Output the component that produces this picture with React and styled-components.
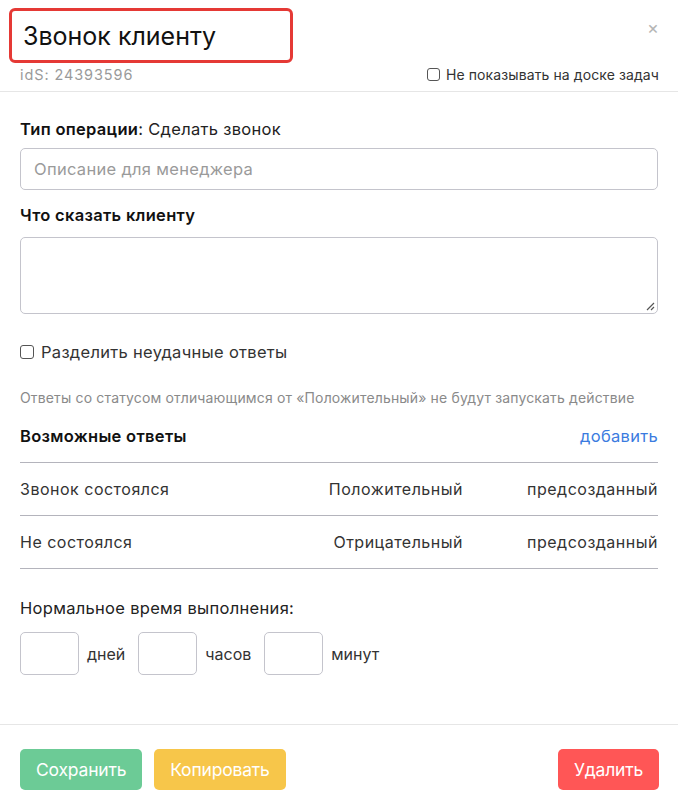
import React from "react";
import styled, { createGlobalStyle } from "styled-components";

const Global = createGlobalStyle`
  html, body { margin: 0; padding: 0; background: #fff; }
  body { font-family: Inter, "Noto Sans", sans-serif; color: #222; }
  * { box-sizing: border-box; }
`;

const Modal = styled.div`
  width: 678px;
  height: 806px;
  background: #fff;
  display: flex;
  flex-direction: column;
`;

const Header = styled.div`
  padding: 8px 19px 0 9px;
  border-bottom: 1px solid #e6e6e6;
  height: 92px;
  display: flex;
  flex-direction: column;
`;

const TitleRow = styled.div`
  display: flex;
  justify-content: space-between;
  align-items: flex-start;
`;

const TitleBox = styled.div`
  border: 3px solid #e53935;
  border-radius: 6px;
  width: 284px;
  height: 55px;
  display: flex;
  align-items: center;
  padding-left: 11px;
`;

const Title = styled.h1`
  margin: 0;
  font-size: 25px;
  font-weight: 400;
  color: #111;
`;

const Close = styled.span`
  color: #b5b5b5;
  font-size: 18px;
  margin-top: 11px;
  line-height: 1;
`;

const MetaRow = styled.div`
  display: flex;
  justify-content: space-between;
  align-items: center;
  padding-left: 11px;
  margin-top: 3px;
`;

const Ids = styled.span`
  font-size: 14.5px;
  color: #9a9a9a;
  letter-spacing: 0.9px;
`;

const CheckLabel = styled.label`
  display: flex;
  align-items: center;
  gap: ${(p) => (p.$big ? "7px" : "6px")};
  font-size: ${(p) => (p.$big ? "16.5px" : "14px")};
  color: #333;
  letter-spacing: ${(p) => (p.$big ? "0.3px" : "0.1px")};
`;

const Box = styled.span`
  width: ${(p) => p.$size || 13}px;
  height: ${(p) => p.$size || 13}px;
  border: 1px solid #555;
  border-radius: 3px;
  display: inline-block;
`;

const Body = styled.div`
  flex: 1;
  padding: 27px 20px 0 20px;
  display: flex;
  flex-direction: column;
`;

const Label = styled.div`
  font-size: 16.5px;
  color: #222;
  letter-spacing: 0.3px;
  margin-top: ${(p) => p.$mt || 0}px;
  margin-bottom: ${(p) => p.$mb || 0}px;
  b { font-weight: 600; color: #111; }
`;

const Input = styled.div`
  height: 42px;
  border: 1px solid #c4c4cc;
  border-radius: 5px;
  display: flex;
  align-items: center;
  padding-left: 13px;
  font-size: 16.5px;
  color: #9a9a9a;
  letter-spacing: 0.3px;
  margin-bottom: ${(p) => p.$mb || 0}px;
`;

const TextArea = styled.div`
  height: 77px;
  border: 1px solid #c4c4cc;
  border-radius: 5px;
  position: relative;
  margin-bottom: 28px;
`;

const Grip = styled.svg`
  position: absolute;
  right: 2px;
  bottom: 2px;
`;

const Note = styled.div`
  font-size: 14px;
  color: #8a8a8a;
  margin-top: 27px;
  letter-spacing: 0.15px;
`;

const SectionHead = styled.div`
  display: flex;
  justify-content: space-between;
  align-items: center;
  margin-top: 20px;
  padding-bottom: 16px;
  border-bottom: 1px solid #b4b4bc;
`;

const Link = styled.span`
  color: #3a7be0;
  font-size: 16.5px;
  letter-spacing: 0.3px;
`;

const Row = styled.div`
  display: grid;
  grid-template-columns: 1fr 150px 195px;
  align-items: center;
  height: 53px;
  border-bottom: 1px solid #b4b4bc;
  font-size: 16px;
  color: #333;
  letter-spacing: 0.5px;
`;

const Cell = styled.span`
  text-align: ${(p) => p.$align || "left"};
`;

const TimeRow = styled.div`
  display: flex;
  align-items: center;
  margin-top: 14px;
`;

const SmallBox = styled.div`
  width: 59px;
  height: 43px;
  border: 1px solid #c4c4cc;
  border-radius: 5px;
`;

const Unit = styled.span`
  font-size: 16px;
  color: #333;
  margin: 0 13px 0 8px;
  letter-spacing: 0;
`;

const Footer = styled.div`
  border-top: 1px solid #e6e6e6;
  height: 82px;
  padding: 24px 19px 0 20px;
  display: flex;
  gap: 12px;
`;

const colors = { green: "#6ccb96", yellow: "#f7c64a", red: "#ff5656" };

const Button = styled.button`
  height: 41px;
  padding: 0 16px;
  border: none;
  border-radius: 5px;
  background: ${(p) => colors[p.$color]};
  color: #fff;
  font-family: Inter, "Noto Sans", sans-serif;
  font-size: 17.5px;
  letter-spacing: -0.2px;
  margin-left: ${(p) => (p.$push ? "auto" : "0")};
`;

export default function App() {
  return (
    <>
      <Global />
      <Modal>
        <Header>
          <TitleRow>
            <TitleBox>
              <Title>Звонок клиенту</Title>
            </TitleBox>
            <Close>×</Close>
          </TitleRow>
          <MetaRow>
            <Ids>idS: 24393596</Ids>
            <CheckLabel>
              <Box />
              Не показывать на доске задач
            </CheckLabel>
          </MetaRow>
        </Header>
        <Body>
          <Label $mb={9}>
            <b>Тип операции</b>: Сделать звонок
          </Label>
          <Input $mb={15}>Описание для менеджера</Input>
          <Label $mb={12}>
            <b>Что сказать клиенту</b>
          </Label>
          <TextArea>
            <Grip width="10" height="10" viewBox="0 0 10 10">
              <path d="M9 2 L2 9 M9 6 L6 9" stroke="#555" strokeWidth="1.2" />
            </Grip>
          </TextArea>
          <CheckLabel $big>
            <Box $size={14} />
            Разделить неудачные ответы
          </CheckLabel>
          <Note>
            Ответы со статусом отличающимся от «Положительный» не будут запускать действие
          </Note>
          <SectionHead>
            <Label>
              <b>Возможные ответы</b>
            </Label>
            <Link>добавить</Link>
          </SectionHead>
          <Row>
            <Cell>Звонок состоялся</Cell>
            <Cell $align="right">Положительный</Cell>
            <Cell $align="right">предсозданный</Cell>
          </Row>
          <Row>
            <Cell>Не состоялся</Cell>
            <Cell $align="right">Отрицательный</Cell>
            <Cell $align="right">предсозданный</Cell>
          </Row>
          <Label $mt={29}>Нормальное время выполнения:</Label>
          <TimeRow>
            <SmallBox />
            <Unit>дней</Unit>
            <SmallBox />
            <Unit>часов</Unit>
            <SmallBox />
            <Unit>минут</Unit>
          </TimeRow>
        </Body>
        <Footer>
          <Button $color="green">Сохранить</Button>
          <Button $color="yellow">Копировать</Button>
          <Button $color="red" $push>
            Удалить
          </Button>
        </Footer>
      </Modal>
    </>
  );
}
